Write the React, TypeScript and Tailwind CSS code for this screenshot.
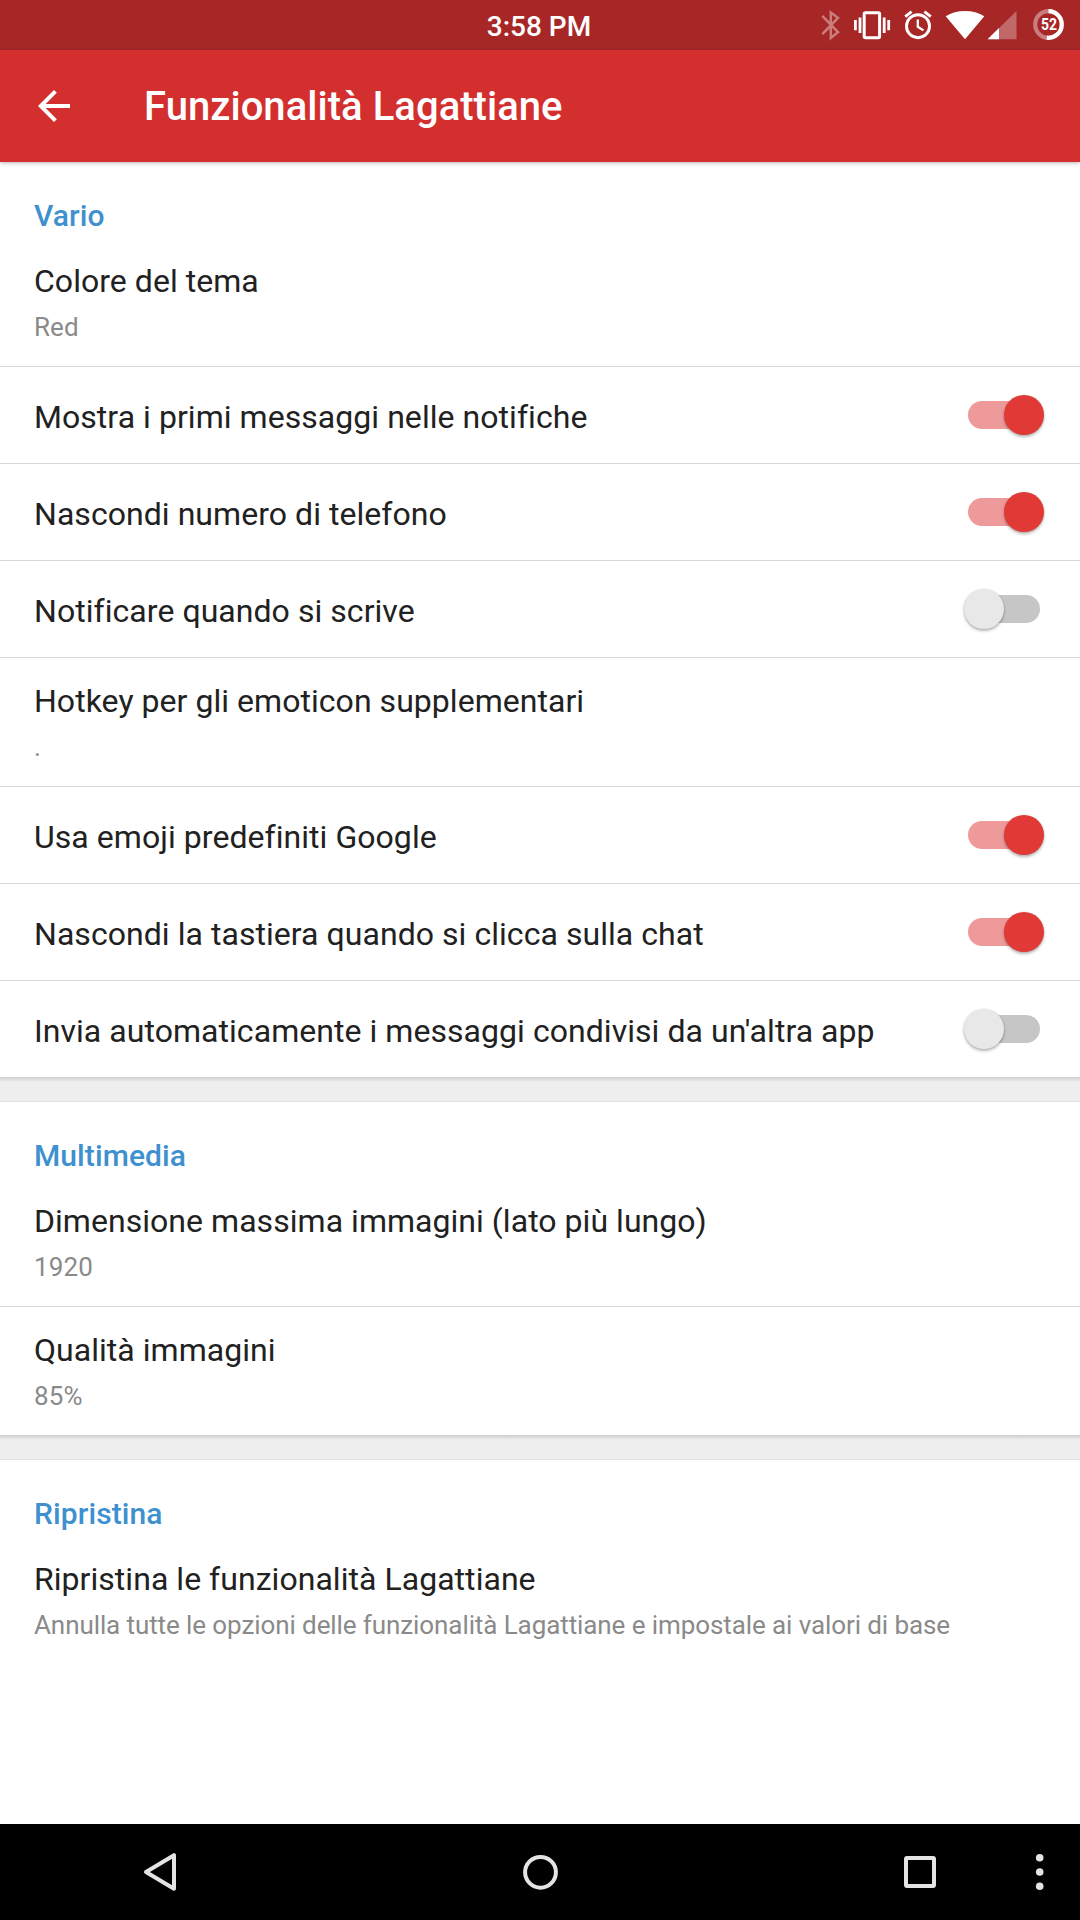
import React from 'react';
import clsx from 'clsx';

interface SwitchProps {
  on: boolean;
}

const Switch: React.FC<SwitchProps> = ({ on }) => (
  <span
    role="switch"
    aria-checked={on}
    className="relative flex h-10 w-20 shrink-0 items-center px-1"
  >
    <span
      className={clsx('h-7 w-[72px] rounded-full', on ? 'bg-[#ef9a9a]' : 'bg-[#c6c6c6]')}
    />
    <span
      className={clsx(
        'absolute top-0 size-10 rounded-full shadow-[0_2px_3px_rgba(0,0,0,0.28),0_0_2px_rgba(0,0,0,0.12)]',
        on ? 'right-0 bg-[#e13935]' : 'left-0 bg-[#e8e8e8]'
      )}
    />
  </span>
);

interface Item {
  title: string;
  value?: string;
  on?: boolean;
}

interface SectionData {
  heading: string;
  items: Item[];
}

const sections: SectionData[] = [
  {
    heading: 'Vario',
    items: [
      { title: 'Colore del tema', value: 'Red' },
      { title: 'Mostra i primi messaggi nelle notifiche', on: true },
      { title: 'Nascondi numero di telefono', on: true },
      { title: 'Notificare quando si scrive', on: false },
      { title: 'Hotkey per gli emoticon supplementari', value: '.' },
      { title: 'Usa emoji predefiniti Google', on: true },
      { title: 'Nascondi la tastiera quando si clicca sulla chat', on: true },
      { title: "Invia automaticamente i messaggi condivisi da un'altra app", on: false },
    ],
  },
  {
    heading: 'Multimedia',
    items: [
      { title: 'Dimensione massima immagini (lato più lungo)', value: '1920' },
      { title: 'Qualità immagini', value: '85%' },
    ],
  },
  {
    heading: 'Ripristina',
    items: [
      {
        title: 'Ripristina le funzionalità Lagattiane',
        value: 'Annulla tutte le opzioni delle funzionalità Lagattiane e impostale ai valori di base',
      },
    ],
  },
];

const Row: React.FC<{ item: Item }> = ({ item }) => {
  if (item.value !== undefined) {
    return (
      <div>
        <div className="h-32 px-[34px] pt-[23px]">
          <p className="text-[32px] leading-10 tracking-[0.04px] text-[#212121]">{item.title}</p>
          <p
            className={clsx(
              'mt-2.5 text-[26px] leading-8 text-[#8a8a8a]',
              item.value.length > 40 ? 'tracking-[-0.09px]' : 'tracking-[0.1px]'
            )}
          >
            {item.value}
          </p>
        </div>
      </div>
    );
  }

  return (
    <div>
      <div className="flex h-24 items-center justify-between pr-9 pl-[34px]">
        <p className="pt-1 text-[32px] leading-10 tracking-[0.05px] text-[#212121]">{item.title}</p>
        <Switch on={!!item.on} />
      </div>
    </div>
  );
};

const Section: React.FC<{ section: SectionData }> = ({ section }) => (
  <section>
    <h2 className="h-[76px] px-[34px] pt-[34px] text-[30px] leading-10 font-medium tracking-[0.1px] text-[#3e90cf]">
      {section.heading}
    </h2>
    <div className="divide-y divide-[#d9d9d9]">
      {section.items.map((item) => (
        <Row key={item.title} item={item} />
      ))}
    </div>
  </section>
);

// Gray strip between two cards, with the shadow of the upper one
const SectionGap = () => (
  <div className="h-[25px] border-b border-[#e2e2e2] bg-[#eeeeee]">
    <div className="h-[5px] bg-linear-to-b from-[#cfcfcf] to-[#eeeeee]" />
  </div>
);

const StatusIcons = () => (
  <svg width="280" height="50" viewBox="0 0 280 50" fill="none">
    {/* Bluetooth */}
    <path
      d="M22.3 15.8L38 32.2L30.8 38V12.5L38 17.8L22.3 34.2"
      stroke="#fff"
      strokeOpacity="0.4"
      strokeWidth="2.5"
    />
    {/* Vibrate */}
    <rect x="64.2" y="12.7" width="15.4" height="25" rx="1.2" stroke="#fff" strokeWidth="3" />
    <path
      d="M60 17.5V33M55.4 20V30.3M84.2 17.5V33M88.7 20V30.3"
      stroke="#fff"
      strokeWidth="2.8"
    />
    {/* Alarm */}
    <circle cx="118" cy="26.2" r="11.5" stroke="#fff" strokeWidth="2.9" />
    <path d="M105.2 16.6L111.6 11.6M124.4 11.6L130.8 16.6" stroke="#fff" strokeWidth="2.9" />
    <path d="M117.8 19.5V26.8L123.4 30.4" stroke="#fff" strokeWidth="2.3" />
    {/* Wi-Fi */}
    <path d="M145.7 16.3Q154 11 165 11T184.3 16.3L165 39.2Z" fill="#fff" />
    {/* Mobile signal */}
    <path d="M187.6 39.3L216.5 11V39.3Z" fill="#fff" fillOpacity="0.3" />
    <path d="M187.6 39.3L199 28.1V39.3Z" fill="#fff" />
    {/* Battery */}
    <circle cx="248.5" cy="24.5" r="13.3" stroke="#fff" strokeOpacity="0.4" strokeWidth="4.2" />
    <path d="M248.5 11.2A13.3 13.3 0 1 1 246.8 37.7" stroke="#fff" strokeWidth="4.2" />
    <text
      x="241"
      y="30"
      fill="#fff"
      textLength="16"
      lengthAdjust="spacingAndGlyphs"
      className="text-[16px] font-bold"
    >
      52
    </text>
  </svg>
);

const App: React.FC = () => (
  <div className="flex h-[1920px] w-[1080px] flex-col overflow-hidden bg-white font-[Roboto,sans-serif]">
    <div className="grid h-[50px] shrink-0 grid-cols-[400px_280px_400px] bg-[#a72727] text-white">
      <span className="col-start-2 pt-2 pr-0.5 text-center text-[28px] leading-[38px] font-medium">
        3:58 PM
      </span>
      <div className="flex justify-end">
        <StatusIcons />
      </div>
    </div>

    <header className="relative z-10 flex h-28 shrink-0 items-center bg-[#d32f2f] pl-[30px] text-white shadow-[0_1px_4px_rgba(0,0,0,0.3)]">
      <svg width="48" height="48" viewBox="0 0 24 24" fill="currentColor">
        <path d="M20 11H7.83l5.59-5.59L12 4l-8 8 8 8 1.41-1.41L7.83 13H20v-2z" />
      </svg>
      <h1 className="ml-[66px] pt-0.5 text-[40px] leading-[48px] font-medium tracking-[0.04px]">
        Funzionalità Lagattiane
      </h1>
    </header>

    <main className="min-h-0 flex-1">
      {sections.map((section, i) => (
        <React.Fragment key={section.heading}>
          {i > 0 && <SectionGap />}
          <Section section={section} />
        </React.Fragment>
      ))}
    </main>

    <nav className="flex h-24 shrink-0 items-center bg-black pl-[132px] text-[#e4e4e4]">
      <svg width="56" height="56" viewBox="0 0 56 56" fill="none" stroke="currentColor">
        <path d="M14 28L42 11.2V44.8Z" strokeWidth="4" strokeLinejoin="round" />
      </svg>
      <svg className="ml-[324px]" width="56" height="56" viewBox="0 0 56 56" fill="none" stroke="currentColor">
        <circle cx="28.5" cy="28.3" r="15.4" strokeWidth="4" />
      </svg>
      <svg className="ml-[324px]" width="56" height="56" viewBox="0 0 56 56" fill="none" stroke="currentColor">
        <rect x="14" y="14" width="28" height="28" rx="1" strokeWidth="4" />
      </svg>
      <svg className="ml-16" width="56" height="56" viewBox="0 0 56 56" fill="currentColor">
        <circle cx="27.7" cy="13.7" r="3.8" />
        <circle cx="27.7" cy="28" r="3.8" />
        <circle cx="27.7" cy="42.3" r="3.8" />
      </svg>
    </nav>
  </div>
);

export default App;
